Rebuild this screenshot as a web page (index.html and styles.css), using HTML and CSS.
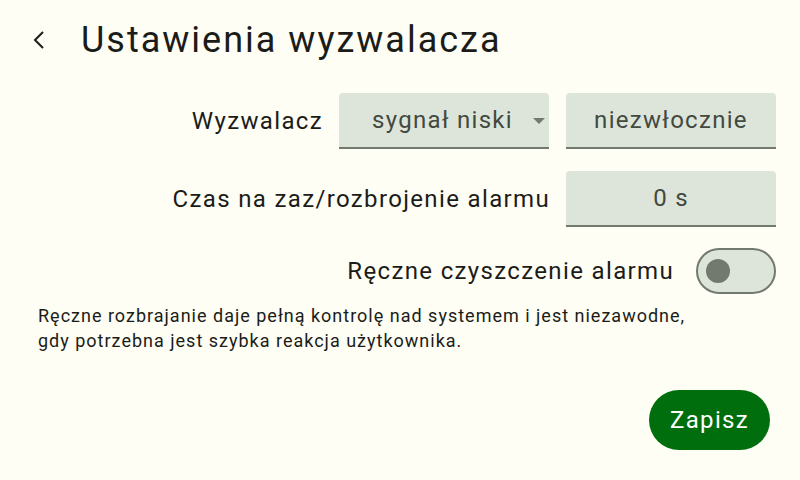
FILE: index.html
```html
<!DOCTYPE html>
<html lang="pl">
  <head>
    <meta charset="UTF-8" />
    <meta name="viewport" content="width=device-width, initial-scale=1.0" />
    <title>Ustawienia wyzwalacza</title>
    <link rel="stylesheet" href="styles.css">
  </head>
  <body>
    <header class="top">
      <button class="back" aria-label="Wstecz">
        <svg width="14" height="20" viewBox="0 0 14 20">
          <path d="M11 2 L3 10 L11 18" fill="none" stroke="#1b1c18" stroke-width="2" />
        </svg>
      </button>
      <h1>Ustawienia wyzwalacza</h1>
    </header>

    <main class="settings">
      <div class="row">
        <span class="label">Wyzwalacz</span>
        <div class="field select">
          <span>sygnał niski</span>
          <svg class="arrow" width="12" height="6" viewBox="0 0 12 6">
            <path d="M0 0 H12 L6 6 Z" fill="#72796f" />
          </svg>
        </div>
        <div class="field">niezwłocznie</div>
      </div>

      <div class="row">
        <span class="label">Czas na zaz/rozbrojenie alarmu</span>
        <div class="field">0 s</div>
      </div>

      <div class="row row-switch">
        <span class="label">Ręczne czyszczenie alarmu</span>
        <div class="switch"><div class="knob"></div></div>
      </div>
    </main>

    <p class="hint">
      Ręczne rozbrajanie daje pełną kontrolę nad systemem i jest niezawodne,<br />
      gdy potrzebna jest szybka reakcja użytkownika.
    </p>

    <footer class="actions">
      <button class="save">Zapisz</button>
    </footer>
  </body>
</html>
```

FILE: styles.css
```css
body {
  margin: 0;
  width: 800px;
  height: 480px;
  background-color: #fefef5;
  color: #1b1c18;
  font-family: Roboto, "Noto Sans", sans-serif;
  overflow: hidden;
}

.top {
  display: flex;
  align-items: center;
  height: 80px;
  padding-left: 26px;
}

.back {
  background: none;
  border: none;
  padding: 0;
  width: 26px;
  height: 26px;
  display: flex;
  align-items: center;
  justify-content: center;
  margin-right: 29px;
}

h1 {
  margin: 0;
  font-size: 36px;
  font-weight: 400;
  letter-spacing: 2px;
}

.settings {
  display: flex;
  flex-direction: column;
  align-items: flex-end;
  padding-right: 24px;
  margin-top: 13px;
}

.row {
  display: flex;
  align-items: center;
  gap: 17px;
  margin-bottom: 22px;
}

.label {
  font-size: 24px;
  letter-spacing: 1.35px;
  margin-right: -1px;
}

.field {
  box-sizing: border-box;
  width: 210px;
  height: 56px;
  background-color: #dde5db;
  border-bottom: 2px solid #72796f;
  border-radius: 4px 4px 0 0;
  display: flex;
  align-items: center;
  justify-content: center;
  font-size: 24px;
  letter-spacing: 1.3px;
  color: #42493f;
}

.select {
  position: relative;
  padding-right: 3px;
}

.select .arrow {
  position: absolute;
  right: 4px;
  top: 25px;
}

.row-switch {
  margin-top: -1px;
  margin-bottom: 0;
  gap: 23px;
}

.switch {
  box-sizing: border-box;
  width: 80px;
  height: 46px;
  border: 2px solid #72796f;
  border-radius: 23px;
  background-color: #dde5db;
  display: flex;
  align-items: center;
  padding-left: 8px;
}

.knob {
  width: 24px;
  height: 24px;
  border-radius: 50%;
  background-color: #72796f;
}

.hint {
  margin: 9px 0 0 38px;
  font-size: 18px;
  line-height: 25px;
  letter-spacing: 1px;
  color: #1b1c18;
}

.actions {
  display: flex;
  justify-content: flex-end;
  padding-right: 30px;
  margin-top: 37px;
}

.save {
  width: 121px;
  height: 60px;
  border: none;
  border-radius: 30px;
  background-color: #006e0c;
  color: #ffffff;
  font-family: Roboto, sans-serif;
  font-size: 24px;
  letter-spacing: 1.3px;
}
```
